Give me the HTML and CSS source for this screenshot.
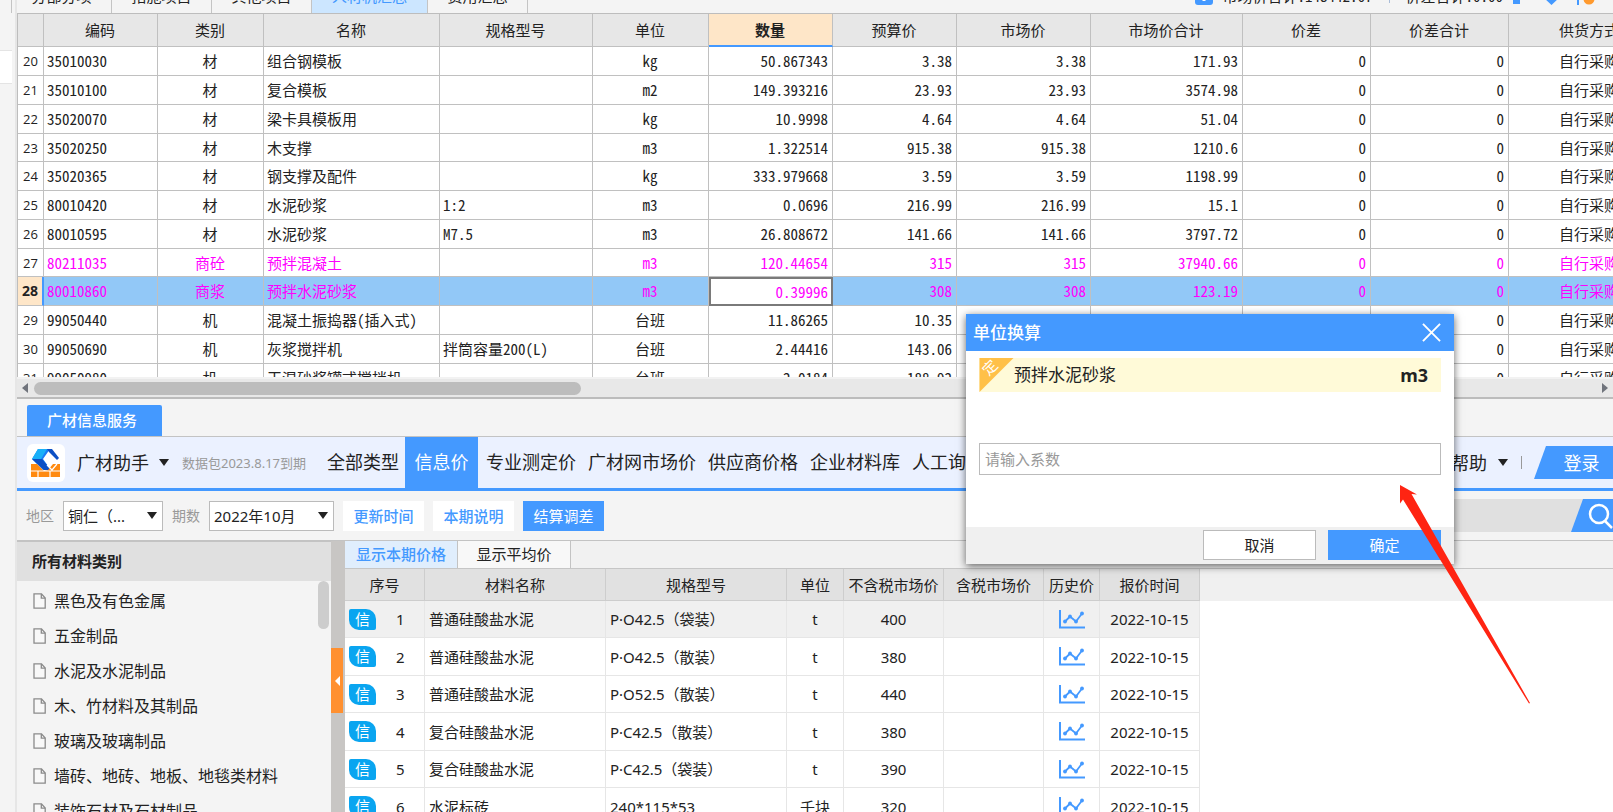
FILE: index.html
```html
<!DOCTYPE html>
<html lang="zh-CN">
<head>
<meta charset="utf-8">
<title>人材机汇总</title>
<link rel="stylesheet" href="styles.css">
</head>
<body>
<svg class="defs" aria-hidden="true">
  <symbol id="doc" viewBox="0 0 13 16"><path d="M1 .8h7.5L12.2 5v10.2H1z" fill="#f8f8f8" stroke="#8a8a8a" stroke-width="1.3"/><path d="M8.3 1v4.2h3.8" fill="none" stroke="#8a8a8a" stroke-width="1.3"/></symbol>
  <symbol id="trend" viewBox="0 0 26 19"><path d="M1 0v17.5h25" fill="none" stroke="#4499ff" stroke-width="2"/><path d="M6 11.5l5-5 6 5 6-8" fill="none" stroke="#4499ff" stroke-width="1.8"/><g fill="#4499ff"><circle cx="6" cy="11.5" r="1.9"/><circle cx="11" cy="6.5" r="1.9"/><circle cx="17" cy="11.5" r="1.9"/><circle cx="23" cy="3.5" r="1.9"/></g></symbol>
</svg>
<div class="app">
  <div class="rail"><div class="rail-item"></div></div>
  <main class="main">
    <div class="topbar">
      <nav class="tabs">
        <a class="tab" href="#">分部分项</a><a class="tab" href="#">措施项目</a><a class="tab" href="#">其他项目</a><a class="tab tab-wide tab-on" href="#">人材机汇总</a><a class="tab" href="#">费用汇总</a>
      </nav>
      <div class="totals">
        <svg class="total-icon" viewBox="0 0 18 18"><rect width="18" height="18" rx="3" fill="#4499ff"/><path d="M9 4v10M4 10h10" stroke="#fff" stroke-width="3"/></svg>
        <span class="total">市场价合计:148442.67</span>
        <span class="total-sep"></span>
        <span>价差合计:0.00</span>
        <svg class="total-tools" viewBox="0 0 100 18"><path d="M0 6h7v11H0zM30 10h17l-8.500 8zM64 6h2v12h-2z" fill="#4499ff"/><circle cx="76" cy="12" r="5.500" fill="#ff9a2e"/></svg>
      </div>
    </div>

    <div class="grid-view">
      <table class="grid">
        <colgroup><col class="g0"><col class="g1"><col class="g2"><col class="g3"><col class="g4"><col class="g5"><col class="g6"><col class="g7"><col class="g8"><col class="g9"><col class="g10"><col class="g11"><col class="g12"></colgroup>
        <thead><tr><th></th><th>编码</th><th>类别</th><th>名称</th><th>规格型号</th><th>单位</th><th class="col-on">数量</th><th>预算价</th><th>市场价</th><th>市场价合计</th><th>价差</th><th>价差合计</th><th>供货方式</th></tr></thead>
        <tbody>
        <tr><th>20</th><td>35010030</td><td>材</td><td>组合钢模板</td><td></td><td>kg</td><td>50.867343</td><td>3.38</td><td>3.38</td><td>171.93</td><td>0</td><td>0</td><td>自行采购</td></tr>
        <tr><th>21</th><td>35010100</td><td>材</td><td>复合模板</td><td></td><td>m2</td><td>149.393216</td><td>23.93</td><td>23.93</td><td>3574.98</td><td>0</td><td>0</td><td>自行采购</td></tr>
        <tr><th>22</th><td>35020070</td><td>材</td><td>梁卡具模板用</td><td></td><td>kg</td><td>10.9998</td><td>4.64</td><td>4.64</td><td>51.04</td><td>0</td><td>0</td><td>自行采购</td></tr>
        <tr><th>23</th><td>35020250</td><td>材</td><td>木支撑</td><td></td><td>m3</td><td>1.322514</td><td>915.38</td><td>915.38</td><td>1210.6</td><td>0</td><td>0</td><td>自行采购</td></tr>
        <tr><th>24</th><td>35020365</td><td>材</td><td>钢支撑及配件</td><td></td><td>kg</td><td>333.979668</td><td>3.59</td><td>3.59</td><td>1198.99</td><td>0</td><td>0</td><td>自行采购</td></tr>
        <tr><th>25</th><td>80010420</td><td>材</td><td>水泥砂浆</td><td>1:2</td><td>m3</td><td>0.0696</td><td>216.99</td><td>216.99</td><td>15.1</td><td>0</td><td>0</td><td>自行采购</td></tr>
        <tr><th>26</th><td>80010595</td><td>材</td><td>水泥砂浆</td><td>M7.5</td><td>m3</td><td>26.808672</td><td>141.66</td><td>141.66</td><td>3797.72</td><td>0</td><td>0</td><td>自行采购</td></tr>
        <tr class="mixed"><th>27</th><td>80211035</td><td>商砼</td><td>预拌混凝土</td><td></td><td>m3</td><td>120.44654</td><td>315</td><td>315</td><td>37940.66</td><td>0</td><td>0</td><td>自行采购</td></tr>
        <tr class="mixed row-on"><th>28</th><td>80010860</td><td>商浆</td><td>预拌水泥砂浆</td><td></td><td>m3</td><td class="cell-on">0.39996</td><td>308</td><td>308</td><td>123.19</td><td>0</td><td>0</td><td>自行采购</td></tr>
        <tr><th>29</th><td>99050440</td><td>机</td><td>混凝土振捣器(插入式)</td><td></td><td>台班</td><td>11.86265</td><td>10.35</td><td>10.35</td><td>122.78</td><td>0</td><td>0</td><td>自行采购</td></tr>
        <tr><th>30</th><td>99050690</td><td>机</td><td>灰浆搅拌机</td><td>拌筒容量200(L)</td><td>台班</td><td>2.44416</td><td>143.06</td><td>143.06</td><td>349.66</td><td>0</td><td>0</td><td>自行采购</td></tr>
        <tr><th>31</th><td>99050980</td><td>机</td><td>干混砂浆罐式搅拌机</td><td></td><td>台班</td><td>2.0184</td><td>188.92</td><td>188.92</td><td>381.32</td><td>0</td><td>0</td><td>自行采购</td></tr>
        </tbody>
      </table>
    </div>
    <div class="hscroll"><span class="arrow-left"></span><div class="hscroll-track"><div class="hscroll-thumb"></div></div><span class="arrow-right"></span></div>

    <div class="service-tabs"><a class="service-tab" href="#">广材信息服务</a></div>

    <header class="helper">
      <svg class="logo" viewBox="0 0 38 38"><rect width="38" height="38" rx="6" fill="#fff"/><path d="M11 5h12l-7 10 8 11h-8L5 15z" fill="#1a7df5"/><path d="M11 5L5 15h9l6-10z" fill="#19b0f8"/><path d="M5 15l12 11h7l-9-11z" fill="#0c4fc4"/><path d="M20 5h5l7 9-2 2-8-8z" fill="#0c4fc4"/><path d="M4 20h6l7 7 4-1 5-6h7v13H4z" fill="#ff8a10"/><path d="M4 27h29M11 27v6M23 27v6M20 21l5 5 5-6" fill="none" stroke="#fff" stroke-width="1.200"/></svg>
      <button class="brand" type="button">广材助手<span class="caret"></span></button>
      <span class="expiry">数据包2023.8.17到期</span>
      <nav class="kinds">
        <a href="#">全部类型</a><a class="kind-on" href="#">信息价</a><a href="#">专业测定价</a><a href="#">广材网市场价</a><a href="#">供应商价格</a><a href="#">企业材料库</a><a href="#">人工询价</a>
      </nav>
      <button class="help" type="button">帮助<span class="caret"></span></button>
      <span class="help-sep"></span>
      <button class="login" type="button">登录</button>
    </header>

    <div class="filters">
      <label for="area">地区</label>
      <span class="pick pick-area"><select id="area"><option>铜仁（...</option></select></span>
      <label for="period">期数</label>
      <span class="pick pick-period"><select id="period"><option>2022年10月</option></select></span>
      <button class="btn" type="button">更新时间</button>
      <button class="btn" type="button">本期说明</button>
      <button class="btn btn-fill" type="button">结算调差</button>
      <form class="search">
        <input type="text" aria-label="搜索" value="预拌水泥砂浆">
        <button type="button" aria-label="搜索"><svg viewBox="0 0 30 30"><circle cx="13" cy="13" r="9" fill="none" stroke="#fff" stroke-width="2.500"/><path d="M19 20l7 7" stroke="#fff" stroke-width="2.500"/></svg></button>
      </form>
    </div>

    <div class="body">
      <aside class="side">
        <h2>所有材料类别</h2>
        <div class="side-list">
          <ul>
            <li><svg><use href="#doc"/></svg>黑色及有色金属</li>
            <li><svg><use href="#doc"/></svg>五金制品</li>
            <li><svg><use href="#doc"/></svg>水泥及水泥制品</li>
            <li><svg><use href="#doc"/></svg>木、竹材料及其制品</li>
            <li><svg><use href="#doc"/></svg>玻璃及玻璃制品</li>
            <li><svg><use href="#doc"/></svg>墙砖、地砖、地板、地毯类材料</li>
            <li><svg><use href="#doc"/></svg>装饰石材及石材制品</li>
          </ul>
          <div class="vscroll"></div>
        </div>
      </aside>
      <div class="splitter"><button type="button" aria-label="收起"></button></div>
      <section class="prices">
        <div class="price-tabs"><a class="price-on" href="#">显示本期价格</a><a href="#">显示平均价</a></div>
        <div class="price-view">
          <table class="price">
            <colgroup><col class="p0"><col class="p1"><col class="p2"><col class="p3"><col class="p4"><col class="p5"><col class="p6"><col class="p7"></colgroup>
            <thead><tr><th>序号</th><th>材料名称</th><th>规格型号</th><th>单位</th><th>不含税市场价</th><th>含税市场价</th><th>历史价</th><th>报价时间</th></tr></thead>
            <tbody>
            <tr class="price-row-on"><td><div class="no"><span class="info">信</span>1</div></td><td>普通硅酸盐水泥</td><td>P·O42.5（袋装）</td><td>t</td><td>400</td><td></td><td><svg><use href="#trend"/></svg></td><td>2022-10-15</td></tr>
            <tr><td><div class="no"><span class="info">信</span>2</div></td><td>普通硅酸盐水泥</td><td>P·O42.5（散装）</td><td>t</td><td>380</td><td></td><td><svg><use href="#trend"/></svg></td><td>2022-10-15</td></tr>
            <tr><td><div class="no"><span class="info">信</span>3</div></td><td>普通硅酸盐水泥</td><td>P·O52.5（散装）</td><td>t</td><td>440</td><td></td><td><svg><use href="#trend"/></svg></td><td>2022-10-15</td></tr>
            <tr><td><div class="no"><span class="info">信</span>4</div></td><td>复合硅酸盐水泥</td><td>P·C42.5（散装）</td><td>t</td><td>380</td><td></td><td><svg><use href="#trend"/></svg></td><td>2022-10-15</td></tr>
            <tr><td><div class="no"><span class="info">信</span>5</div></td><td>复合硅酸盐水泥</td><td>P·C42.5（袋装）</td><td>t</td><td>390</td><td></td><td><svg><use href="#trend"/></svg></td><td>2022-10-15</td></tr>
            <tr><td><div class="no"><span class="info">信</span>6</div></td><td>水泥标砖</td><td>240*115*53</td><td>千块</td><td>320</td><td></td><td><svg><use href="#trend"/></svg></td><td>2022-10-15</td></tr>
            </tbody>
          </table>
        </div>
      </section>
    </div>
  </main>
</div>

<div class="dialog" role="dialog" aria-labelledby="dialog-title">
  <div class="dialog-head"><h2 id="dialog-title">单位换算</h2><button type="button" aria-label="关闭"><svg viewBox="0 0 20 20"><path d="M1 1l18 18M19 1L1 19" stroke="#fff" stroke-width="2"/></svg></button></div>
  <div class="dialog-body">
    <div class="item"><svg class="item-flag" viewBox="0 0 35 35"><path d="M0 0h35L0 35z" fill="#ffc048"/><text class="flag-text" x="-7" y="20" transform="rotate(-45)">定</text></svg><span>预拌水泥砂浆</span><strong>m3</strong></div>
    <input type="text" aria-label="系数" placeholder="请输入系数">
  </div>
  <div class="dialog-foot"><button type="button">取消</button><button class="ok" type="button">确定</button></div>
</div>
<svg class="pointer" viewBox="0 0 130 220" aria-hidden="true"><path d="M0 0l17 9.500-5.500-.5L130 218l-1 .5L3 14.500 0 18.500z" fill="#ff2412"/></svg>
</body>
</html>
```
FILE: styles.css
```css
* { box-sizing: border-box; }
body { margin: 0; background: #f4f4f4; color: #222; font-family: "Noto Sans", "Noto Sans CJK SC", sans-serif; font-size: 15px; line-height: 20px; overflow: hidden; }
button, input, select { font: inherit; color: inherit; }
button { border: 0; padding: 0; background: none; }
a { color: inherit; text-decoration: none; }
h2, ul { margin: 0; padding: 0; }
.defs { position: absolute; width: 0; height: 0; }

.app { display: flex; height: 100vh; }
.rail { flex: 0 0 17px; padding-top: 50px; border-right: 2px solid #e6e6e6; }
.rail-item { width: 12px; height: 34px; background: #fff; border: solid #e4e4e4; border-width: 1px 0; }
.main { flex: 1; min-width: 0; display: flex; flex-direction: column; }

.topbar { flex: none; height: 13px; display: flex; align-items: flex-end; justify-content: space-between; overflow: hidden; margin-left: -6px; font-family: "Noto Sans Mono CJK SC", "Noto Sans CJK SC", sans-serif; }
.tabs { display: flex; border-left: 1px solid #c4c4c4; }
.tab { width: 100px; height: 34px; line-height: 34px; text-align: center; border-right: 1px solid #c4c4c4; }
.tab-wide { width: 116px; }
.tab-on { background: #cce6ff; color: #4499ff; }
.totals { display: flex; align-items: center; height: 34px; }
.total-icon { width: 18px; height: 18px; margin-right: 9px; }
.total { width: 167px; }
.total-sep { width: 1px; height: 14px; background: #a9bcd8; margin-right: 15px; }
.total-tools { width: 100px; height: 18px; margin-left: 10px; }

.grid-view { flex: 0 0 364px; overflow: hidden; border-top: 1px solid #bdbdbd; border-left: 1px solid #bdbdbd; }
.grid { width: 1653px; table-layout: fixed; border-collapse: separate; border-spacing: 0; background: #fff; font-family: "Noto Sans Mono CJK SC", "Noto Sans CJK SC", monospace; }
.g0 { width: 26px; } .g1 { width: 114px; } .g2 { width: 106px; } .g3 { width: 176px; } .g4 { width: 153px; } .g5 { width: 116px; } .g6, .g7 { width: 124px; } .g8 { width: 134px; } .g9 { width: 152px; } .g10 { width: 128px; } .g11 { width: 138px; } .g12 { width: 162px; }
.grid th, .grid td { height: 29px; padding: 0 4px 0 3px; border: solid #c0c0c0; border-width: 0 1px 1px 0; text-align: right; white-space: nowrap; overflow: hidden; line-height: 20px; font-weight: 400; }
.grid tbody tr:nth-child(4n) > * { height: 28px; }
.grid thead th { height: 33px; background: #e7e7e7; text-align: center; }
.grid tbody th { padding: 0; text-align: center; font-family: "Open Sans", sans-serif; font-size: 13px; }
.grid td:nth-child(2), .grid td:nth-child(4), .grid td:nth-child(5) { text-align: left; }
.grid td:nth-child(3), .grid td:nth-child(6), .grid td:nth-child(13) { text-align: center; }
.grid thead .col-on { background: #fee6c8; font-weight: 700; border-bottom: 2px solid #4499ff; }
.mixed td { color: #ff00ff; }
.row-on td { background: #92c8f7; }
.grid .row-on th { background: #fee6c8; font-weight: 700; font-size: 14px; border-right: 2px solid #4499ff; }
.grid .row-on .cell-on { background: #fff; border: 2px solid #7a7a7a; padding-right: 3px; }

.hscroll { flex: 0 0 22px; display: flex; align-items: center; gap: 6px; padding: 0 5px; background: #e8e8e8; border-top: 2px solid #f2f2f2; border-bottom: 2px solid #bcbcbc; }
.hscroll-track { flex: 1; }
.hscroll-thumb { width: 35%; height: 13px; border-radius: 7px; background: #bdbdbd; }
.arrow-left, .arrow-right { border: 5px solid transparent; }
.arrow-left { border-left-width: 0; border-right: 6px solid #70747c; }
.arrow-right { border-right-width: 0; border-left: 6px solid #70747c; }

.service-tabs { flex: 0 0 38px; display: flex; align-items: flex-end; padding-left: 10px; border-bottom: 1px solid #c3c3c3; }
.service-tab { width: 135px; height: 31px; line-height: 31px; padding-left: 20px; background: #4499ff; color: #fff; font-weight: 500; border-radius: 2px 2px 0 0; }

.helper { flex: 0 0 50px; display: flex; align-items: center; padding-left: 10px; background: #ebf1ff; border-bottom: 3px solid #4499ff; font-size: 18px; line-height: 24px; white-space: nowrap; }
.logo { width: 38px; height: 38px; }
.brand { display: flex; align-items: center; gap: 10px; margin-left: 12px; }
.caret { border: 5px solid transparent; border-top: 7px solid #222; border-bottom-width: 0; }
.expiry { width: 132px; margin-left: 13px; font-size: 13px; color: #999; }
.kinds { flex: 1; min-width: 0; overflow: hidden; display: flex; gap: 12px; line-height: 51px; }
.kinds a { flex: none; margin-left: 0; }
.kinds .kind-on { width: 73px; margin: 0 -4px 0 -6px; text-align: center; background: #4499ff; color: #fff; }
.kinds a:first-child { margin-left: 13px; }
.help { display: flex; align-items: center; gap: 11px; }
.help-sep { width: 1px; height: 13px; margin: 0 12px 0 13px; background: #999; }
.login { width: 79px; height: 33px; padding-left: 16px; background: #4499ff; color: #fff; clip-path: polygon(12px 0, 100% 0, 100% 100%, 0 100%); }

.filters { flex: 0 0 50px; display: flex; align-items: center; gap: 9px; padding-left: 9px; border-bottom: 1px solid #c3c3c3; }
.filters label { color: #999; font-size: 14px; }
.pick { position: relative; height: 30px; }
.pick select { width: 100%; height: 100%; padding: 0 4px; appearance: none; border: 1px solid #bbb; border-radius: 0; background: #fff; }
.pick::after { content: ""; position: absolute; right: 6px; top: 11px; border: 5px solid transparent; border-top: 7px solid #222; border-bottom-width: 0; pointer-events: none; }
.pick-area { width: 100px; }
.pick-period { width: 125px; }
.btn { width: 81px; height: 30px; background: #fff; color: #4499ff; font-weight: 500; }
.btn-fill { background: #4499ff; color: #fff; font-weight: 400; }
.search { display: flex; margin-left: auto; height: 33px; }
.search input { width: 260px; padding: 0 10px 0 38px; border: 0; background: #e0e0e0; text-align: left; }
.search button { width: 42px; margin-left: -12px; padding-left: 15px; background: #4499ff; clip-path: polygon(12px 0, 100% 0, 100% 100%, 0 100%); }
.search svg { display: block; width: 30px; height: 30px; }

.body { flex: 1; min-height: 0; display: flex; }
.side { flex: 0 0 314px; display: flex; flex-direction: column; overflow: hidden; }
.side h2 { flex: 0 0 40px; padding-left: 15px; border-top: 1px solid #c3c3c3; background: #e0e0e0; font-size: 15px; line-height: 39px; }
.side-list { flex: 1; min-height: 0; display: flex; justify-content: space-between; padding-right: 2px; }
.side li { display: flex; align-items: center; gap: 8px; height: 35px; padding-left: 16px; font-size: 16px; list-style: none; }
.side ul { padding-top: 2px; }
.side li svg { width: 13px; height: 16px; }
.vscroll { width: 11px; height: 48px; border-radius: 6px; background: #cdcdcd; }
.splitter { flex: 0 0 14px; padding-top: 107px; background: #c8c6c4; }
.splitter button { display: flex; align-items: center; justify-content: center; width: 12px; height: 65px; background: #ff9030; }
.splitter button::before { content: ""; border: 5px solid transparent; border-left-width: 0; border-right-color: #fff; }

.prices { flex: 1; min-width: 0; display: flex; flex-direction: column; background: #fff; }
.price-tabs { flex: 0 0 28px; display: flex; background: #f1f1f1; border-bottom: 1px solid #c6c6c6; line-height: 27px; }
.price-tabs a { width: 113px; text-align: center; border-right: 1px solid #c3c3c3; background: #f8f8f8; }
.price-tabs .price-on { background: #e0eefd; color: #4499ff; font-weight: 500; }
.price-view { flex: 1; min-height: 0; overflow: hidden; background: linear-gradient(#f0f0f0 32px, #fff 32px); }
.price { width: 855px; table-layout: fixed; border-collapse: separate; border-spacing: 0; background: #fff; }
.p0 { width: 80px; } .p1, .p2 { width: 181px; } .p3 { width: 57px; } .p4, .p5 { width: 100px; } .p6 { width: 56px; } .p7 { width: 100px; }
.price th, .price td { height: 37px; padding: 0 4px; border: solid #e6e6e6; border-width: 0 1px 1px 0; text-align: center; white-space: nowrap; font-weight: 400; }
.price th { height: 32px; padding: 0; background: #e1e1e1; border-color: #cdcdcd; }
.price tbody tr:nth-child(2n) td { height: 38px; }
.price td:nth-child(2), .price td:nth-child(3) { text-align: left; }
.price-row-on td { background: #f0f0f0; }
.price td svg { display: block; width: 26px; height: 19px; margin: 0 auto; }
.no { display: flex; align-items: center; gap: 20px; }
.info { width: 27px; height: 21px; border-radius: 2px 10px 2px 10px; background: #0aa5f0; color: #fff; line-height: 20px; }

.dialog { position: absolute; top: 314px; right: 159px; width: 488px; background: #fff; box-shadow: 0 2px 8px rgba(0, 0, 0, .6); }
.dialog-head { display: flex; align-items: center; justify-content: space-between; height: 37px; padding: 0 13px 0 7px; background: #4499ff; color: #fff; }
.dialog-head h2 { font-size: 17px; line-height: 24px; font-weight: 500; }
.dialog-head svg { display: block; width: 19px; height: 19px; }
.dialog-body { height: 176px; padding: 7px 13px 0; }
.item { display: flex; align-items: center; height: 34px; padding-right: 13px; background: #fffad8; font-size: 17px; }
.item-flag { width: 35px; height: 34px; }
.item strong { margin-left: auto; font-size: 18px; }
.flag-text { fill: #fff; font-size: 15px; }
.dialog-body input { display: block; width: 100%; height: 32px; margin-top: 51px; padding: 0 5px; border: 1px solid #bbb; background: #fff; }
.dialog-body input::placeholder { color: #999; }
.dialog-foot { display: flex; justify-content: flex-end; gap: 12px; height: 37px; padding: 3px 13px; background: #f0f0f0; }
.dialog-foot button { width: 113px; height: 30px; background: #fff; border: 1px solid #bbb; }
.dialog-foot .ok { background: #4499ff; border-color: #4499ff; color: #fff; }
.pointer { position: absolute; top: 485px; right: 83px; width: 130px; height: 220px; }
```
